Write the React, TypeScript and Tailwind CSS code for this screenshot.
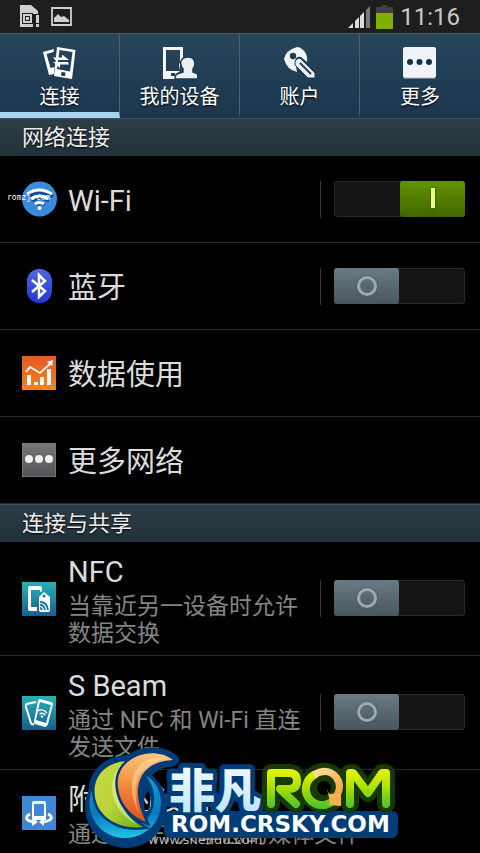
import { useState } from "react";
import type { ReactNode } from "react";

const family = "font-[Roboto,'Noto_Sans_CJK_SC',sans-serif]";

function StatusBar() {
  return (
    <header className="flex h-[33px] items-center bg-[#1e1e1e] pl-5 pr-5 text-[#c9c9c9]">
      <svg width="19" height="23" viewBox="0 0 19 23" fill="#cfcfcf" aria-hidden="true">
        <path d="M0 0h11l7 6v3h-5v13H0z" />
        <path d="M2 8h11v11H2z" fill="#1e1e1e" />
        <path d="M3 9h9v9H3z" />
        <path d="M5 11h5v5H5z" fill="#1e1e1e" />
        <path d="M6 12h3v3H6z" />
        <path d="M14 9h5v14h-5z" fill="#1e1e1e" />
        <path d="M16 10h3v8h-3zM16 19h3v3h-3z" />
      </svg>
      <svg className="ml-3" width="21" height="19" viewBox="0 0 21 19" aria-hidden="true">
        <path d="M1 1h19v17H1z" fill="none" stroke="#cfcfcf" strokeWidth="1.8" />
        <path d="M3 15v-4l4-4 3 3 3-1 5 4v2z" fill="#cfcfcf" />
      </svg>
      <svg className="ml-auto" width="23" height="22" viewBox="0 0 23 22" aria-hidden="true">
        <path d="M0 22l5-5v5zM7 15l4-4v11H7zM12 10l4-4v16h-4z" fill="#dcdcdc" />
        <path d="M18 4l4-4v22h-4z" fill="#7b7b7b" />
      </svg>
      <svg className="ml-[5px]" width="17" height="24" viewBox="0 0 17 24" aria-hidden="true">
        <path d="M6 0h5v2h6v6H0V2h6z" fill="#404040" />
        <path d="M0 8h17v16H0z" fill="#7fb000" />
      </svg>
      <time className="ml-[7px] text-2xl leading-8">11:16</time>
    </header>
  );
}

const TAB_ICONS: ReactNode[] = [
  <svg key="c" width="34" height="34" viewBox="0 0 34 34" aria-hidden="true">
    <path fillRule="evenodd" d="M0 6l11-3-.5 3L3.500 8l4 14 4-1-.5 7-5 1z" fill="#fff" />
    <path fillRule="evenodd" d="M14 1l18.500 3L29 33l-18-3zM16.500 4L14 23l13 2.500L29.500 6z" fill="#fff" />
    <path d="M18.500 26l4 .6-.5 3.600-4-.6z" fill="#203c54" />
    <g fill="#fff"><path d="M10 11.500h9V8.500l7 5.500H12z" /><path d="M26 18.500h-9V22l-7-6h15z" /></g>
  </svg>,
  <svg key="d" width="34" height="34" viewBox="0 0 34 34" aria-hidden="true">
    <path d="M0 1h20v12l-4 5 1 7-4 3v5H0zM3 4v21h14V4z" fill="#f4f7f8" fillRule="evenodd" />
    <path d="M8 27h4v3H8z" fill="#203c54" />
    <path d="M25 11c8 0 8 8 5 12v3c6 2 5 3 5 7H12c0-6 3-5 8-7v-3c-4-5-3-12 5-12z" fill="#e9eff2" stroke="#1f3b54" strokeWidth="1.500" />
  </svg>,
  <svg key="a" width="34" height="34" viewBox="0 0 34 34" aria-hidden="true">
    <path d="M1 13Q3 4 14 1q3 0 5 2 6 4 5 13l-6-5q-5-1-6 4l2 11Q4 24 1 13z" fill="#f3f6f7" />
    <circle cx="10" cy="10" r="3.200" fill="#203c54" />
    <path d="M17 12l15 15v5h-7L12 19q-1-6 5-7z" fill="#e9eef1" stroke="#203c54" strokeWidth="1" />
    <path d="M17 17l11 11" stroke="#203c54" strokeWidth="1.800" />
  </svg>,
  <svg key="m" width="34" height="34" viewBox="0 0 34 34" aria-hidden="true">
    <rect x="0" y="1" width="33" height="31" rx="2" fill="#f0f4f6" />
    <path d="M1 32h31" stroke="#aab8c2" />
    <g fill="#16314a"><circle cx="7" cy="16" r="3" /><circle cx="16.500" cy="16" r="3" /><circle cx="26" cy="16" r="3" /></g>
  </svg>,
];

function Tabs() {
  const [active, setActive] = useState(0);
  return (
    <nav className="grid h-[85px] grid-cols-4 border-t border-[#49616f] bg-linear-to-b from-[#27465c] to-[#1c364e]">
      {["连接", "我的设备", "账户", "更多"].map((label, i) => (
        <button
          key={label}
          type="button"
          onClick={() => setActive(i)}
          className={`flex flex-col items-center border-b-6 pt-3 text-xl leading-7 text-white [text-shadow:0_1px_2px_#000] ${i < 3 ? "border-r border-r-[#4a6170]" : ""} ${i === active ? "border-b-[#a6d2ef]" : "border-b-transparent"}`}
        >
          <span className="mb-[3px] block h-[34px]">{TAB_ICONS[i]}</span>
          {label}
        </button>
      ))}
    </nav>
  );
}

function SectionTitle({ children }: { children: ReactNode }) {
  return (
    <h2 className="h-[38px] border-t border-[#3f505a] bg-linear-to-b from-[#2d3c46] to-[#22323a] pl-[22px] pt-px text-[22px] leading-9 text-[#eeeeee] [text-shadow:0_1px_2px_#000]">
      {children}
    </h2>
  );
}

function Toggle({ label, initial = false }: { label: string; initial?: boolean }) {
  const [on, setOn] = useState(initial);
  return (
    <div className="ml-auto flex h-[37px] shrink-0 border-l border-[#383838] pl-[13px]">
      <label className="relative flex h-9 w-[131px] rounded-[3px] border border-[#292929] bg-[#141414]">
        <input
          type="checkbox"
          role="switch"
          aria-label={label}
          checked={on}
          onChange={() => setOn(!on)}
          className="absolute inset-0 z-10 h-full w-full cursor-pointer opacity-0"
        />
        <span
          className={`-my-px flex h-9 w-[65px] justify-center rounded-[3px] bg-linear-to-b ${on ? "-mr-px ml-auto from-[#629400] to-[#426700]" : "-ml-px from-[#697b84] to-[#49565e]"}`}
        >
          {on ? (
            <i className="mt-[7px] h-5 w-1 bg-[#edff8c] shadow-[0_0_2px_#203000]" />
          ) : (
            <i className="mt-2 size-5 rounded-full border-3 border-[#a0a9af] shadow-[0_0_2px_#36434a]" />
          )}
        </span>
      </label>
    </div>
  );
}

function Row({ icon, title, detail, toggle, on }: { icon: ReactNode; title: string; detail?: string; toggle?: boolean; on?: boolean }) {
  return (
    <li
      className={`flex items-center border-b border-[#292929] pl-[22px] pr-[15px] ${detail ? "py-2" : "h-[87px]"}`}
    >
      <span className="mr-3 w-[34px] shrink-0">{icon}</span>
      <div className={detail ? "min-w-0 flex-1 pr-4 pt-1" : "pt-1"}>
        <h3 className={`text-[29px] text-[#dcdcdc] ${detail ? "leading-9" : "leading-10"}`}>{title}</h3>
        {detail && <p className="mt-[3px] text-[23px] leading-[27px] text-[#858585]">{detail}</p>}
      </div>
      {toggle && <Toggle label={title} initial={on} />}
    </li>
  );
}

const wifiIcon = (
  <svg width="34" height="34" viewBox="0 0 34 34" overflow="visible" aria-hidden="true">
    <circle cx="17.500" cy="17" r="17.500" fill="#3b8bdd" />
    <g fill="none" stroke="#174f8d" strokeWidth="3.500" transform="translate(1 1)"><path d="M5 14q12-9 25 0M9 18q8-6 17 0M13 22q4-3 9 0" /></g>
    <g fill="none" stroke="#fff" strokeWidth="3"><path d="M5 12q12-8 25 0M9 17q8-6 17 0M13 22q4-3 9 0" /></g>
    <circle cx="17.500" cy="26" r="2" fill="#fff" />
  </svg>
);
const bluetoothIcon = (
  <svg width="34" height="34" viewBox="0 0 34 34" aria-hidden="true">
    <defs><linearGradient id="bt" x2="0" y2="1"><stop stopColor="#4e68df" /><stop offset="1" stopColor="#2238d7" /></linearGradient></defs>
    <rect x="5" y="0" width="25" height="34" rx="12" fill="url(#bt)" />
    <path d="M10 11l13 11-6 6V6l6 6-13 11" fill="none" stroke="#fff" strokeWidth="2.500" />
  </svg>
);
const dataIcon = (
  <svg width="34" height="34" viewBox="0 0 34 34" aria-hidden="true">
    <defs><linearGradient id="orange" x2="0" y2="1"><stop stopColor="#e25a28" /><stop offset="1" stopColor="#f28417" /></linearGradient></defs>
    <path d="M0 0h34v34H0z" fill="url(#orange)" />
    <path d="M5 19h4v10H5zM12 26h4v3h-4zM18 21h4v8h-4zM25 13h4v16h-4z" fill="#f7f7f7" />
    <path d="M4 16l4-5 10 6L29 7" fill="none" stroke="#fff" strokeWidth="1.800" /><path d="M25 6l6-2-1 6z" fill="#fff" />
  </svg>
);
const moreIcon = (
  <svg width="34" height="34" viewBox="0 0 34 34" aria-hidden="true">
    <defs><linearGradient id="grey" x2="0" y2="1"><stop stopColor="#777779" /><stop offset="1" stopColor="#555557" /></linearGradient></defs>
    <rect x=".5" y=".5" width="33" height="33" fill="url(#grey)" stroke="#777" />
    <g fill="#f0f0f0"><circle cx="7" cy="16" r="4" /><circle cx="17" cy="16" r="4" /><circle cx="27" cy="16" r="4" /></g>
  </svg>
);
const nfcIcon = (
  <svg width="34" height="34" viewBox="0 0 34 34" aria-hidden="true">
    <defs><linearGradient id="teal" x2="0" y2="1"><stop stopColor="#2ab1b6" /><stop offset="1" stopColor="#155f91" /></linearGradient></defs>
    <path d="M0 0h34v34H0z" fill="url(#teal)" />
    <path d="M8 4h10q2 0 2 2v3l-2 1V8H9v17h6v4H8q-2 0-2-2V6q0-2 2-2z" fill="#fff" />
    <path d="M22 10l6 5v13q0 2-2 2h-7q-2 0-2-2V15z" fill="#fff" /><circle cx="22" cy="14" r="1.500" fill="#16799a" />
    <path d="M18 20q7 0 8 8M18 23q4 0 5 5M18 26q1 0 2 2" fill="none" stroke="#17769a" strokeWidth="1.800" />
  </svg>
);
const beamIcon = (
  <svg width="34" height="34" viewBox="0 0 34 34" aria-hidden="true">
    <path d="M0 0h34v34H0z" fill="url(#teal)" />
    <path d="M14 6L4.500 8q-1 1-.5 3l5 16q1 2 3 1" fill="none" stroke="#fff" strokeWidth="2" />
    <path d="M18 3l11 3q2 0 2 2l-5 20q-1 3-3 3l-10-3q-2-1-1-3l4-20q0-2 2-2zM18 6l-4 18 10 3 5-18z" fill="#fff" fillRule="evenodd" />
    <path d="M16 15q5-3 9 2M17.500 18q3-2 6 1" fill="none" stroke="#fff" strokeWidth="1.400" /><circle cx="20" cy="20.500" r="1.200" fill="#fff" />
  </svg>
);
const nearbyIcon = (
  <svg width="34" height="34" viewBox="0 0 34 34" aria-hidden="true">
    <path d="M0 0h34v34H0z" fill="#3f87d5" />
    <path d="M12 5h10q2 0 2 2v17H10V7q0-2 2-2zM12 8v12h10V8z" fill="#fff" fillRule="evenodd" />
    <path d="M8 18c-6 3-4 7 4 8M26 18c6 3 4 7-6 8" fill="none" stroke="#fff" strokeWidth="2.800" />
    <path d="M10 21l6 5-6 4zM22 22l-5 4 5 4z" fill="#fff" />
  </svg>
);

const LEAF = "M126 761C104 763 92 778 95 797C98 817 119 830 143 827C131 820 120 809 117 795C114 782 118 770 126 761Z";
const FLAME = "M173 760C160 750 141 752 129 761C117 770 115 784 121 799C126 810 135 818 146 822C141 811 137 800 138 788C140 771 152 761 173 760Z";
const RING = "M92 790A35 35 0 0 0 126 838A35 35 0 0 0 161 803C161 791 155 780 146 776C152 784 155 792 154 802A29 29 0 0 1 126 829C110 827 98 815 92 790Z";
const LETTER_R = "M271 804V773H289Q297 773 297 781Q297 789 289 789H280L296 804";
const LETTER_M = "M350 804V773H353L368 793L382 773H386V804";

function BrandMark() {
  return (
    <svg className="pointer-events-none absolute left-20 top-[745px]" width="322" height="108" viewBox="80 745 322 108" role="img" aria-label="非凡ROM ROM.CRSKY.COM">
      <defs>
        <linearGradient id="lime" gradientUnits="userSpaceOnUse" x1="0" y1="768" x2="0" y2="808"><stop stopColor="#eef500" /><stop offset=".5" stopColor="#a8e000" /><stop offset="1" stopColor="#4cc030" /></linearGradient>
        <linearGradient id="gold" x2="1" y2="1"><stop stopColor="#ffe098" /><stop offset="1" stopColor="#f5a13a" /></linearGradient>
        <linearGradient id="leaf" x2="1" y2="1"><stop stopColor="#c9dc43" /><stop offset=".5" stopColor="#b9d338" /><stop offset="1" stopColor="#6ab023" /></linearGradient>
        <linearGradient id="flame" x2="0" y2="1"><stop stopColor="#ffc579" /><stop offset=".5" stopColor="#f0873a" /><stop offset="1" stopColor="#dc4f18" /></linearGradient>
        <linearGradient id="ring" x2="0" y2="1"><stop stopColor="#0fa0dc" /><stop offset=".6" stopColor="#0878bc" /><stop offset="1" stopColor="#20c6ea" /></linearGradient>
        <linearGradient id="ice" x2="0" y2="1"><stop stopColor="#fff" /><stop offset="1" stopColor="#b9e2fa" /></linearGradient>
      </defs>
      <path d="M126 766a41 41 0 1 0 .1 0zM148 791q-6 7-3 20 6 1 6-9 0-7-3-11z" fill="#003c78" fillRule="evenodd" />
      <g fill="#003c78" stroke="#003c78" strokeLinejoin="round" strokeWidth="12"><path d={LEAF} /><path d="M173 760C160 750 141 752 129 761C117 770 115 784 121 799L140 784C145 770 155 762 173 760Z" /></g>
      <path d={RING} fill="url(#ring)" />
      <path d={LEAF} fill="url(#leaf)" stroke="#003c78" strokeWidth="5" paintOrder="stroke" />
      <path d="M122 764C106 779 108 810 138 825C120 812 112 785 122 764Z" fill="#f2f4b0" opacity=".55" />
      <path d={FLAME} fill="url(#flame)" stroke="#003c78" strokeWidth="5" paintOrder="stroke" />
      <path d="M168 758C137 754 122 778 139 814C130 784 138 764 168 758Z" fill="#ffe0b4" opacity=".5" />
      <g fontFamily="'Noto Sans CJK SC', sans-serif" fontWeight="900" fontSize="46" strokeLinejoin="round">
        <text x="169" y="807" fill="#003c78" stroke="#003c78" strokeWidth="10">非凡</text>
        <rect x="164" y="811" width="234" height="27" rx="6" fill="#003c78" stroke="none" />
        <text x="169" y="807" fill="url(#ice)">非凡</text>
      </g>
      <g fill="none" strokeLinecap="round" strokeLinejoin="round">
        <g stroke="#183900" strokeWidth="18"><path d={LETTER_R} /><circle cx="324" cy="788" r="16" /><path d={LETTER_M} /></g>
        <g stroke="url(#lime)" strokeWidth="8"><path d={LETTER_R} /><path d={LETTER_M} /><path d="M314 775a16 16 0 1 0 16 28" /></g>
        <path d="M314 775q13-8 22 2 7 9 0 20" stroke="url(#gold)" strokeWidth="7" strokeLinecap="butt" />
      </g>
      <path d="M327 789l2 5 12-1v13l-13-1 2-3z" fill="#f9b050" />
      <text x="171" y="832" fill="#fff" fontFamily="'DejaVu Sans', sans-serif" fontWeight="700" fontSize="23">ROM.CRSKY.COM</text>
    </svg>
  );
}

export default function App() {
  return (
    <main className={`relative h-screen overflow-hidden bg-black ${family}`}>
      <StatusBar />
      <Tabs />
      <SectionTitle>网络连接</SectionTitle>
      <ul>
        <Row icon={wifiIcon} title="Wi-Fi" toggle on />
        <Row icon={bluetoothIcon} title="蓝牙" toggle />
        <Row icon={dataIcon} title="数据使用" />
        <Row icon={moreIcon} title="更多网络" />
      </ul>
      <SectionTitle>连接与共享</SectionTitle>
      <ul>
        <Row icon={nfcIcon} title="NFC" detail="当靠近另一设备时允许数据交换" toggle />
        <Row icon={beamIcon} title="S Beam" detail="通过 NFC 和 Wi-Fi 直连发送文件" toggle />
        <Row icon={nearbyIcon} title="附近的设备" detail="通过 Wi-Fi 共享您的媒体文件" />
      </ul>
      <span className="absolute left-[7px] top-[192px] font-['DejaVu_Sans_Mono',monospace] text-[8px] leading-3 text-white">romzj.com</span>
      <span className="absolute left-[148px] top-[832px] font-['DejaVu_Sans',sans-serif] text-[13px] leading-4 text-[#b8b8b8]">www.shendu.com</span>
      <BrandMark />
    </main>
  );
}
